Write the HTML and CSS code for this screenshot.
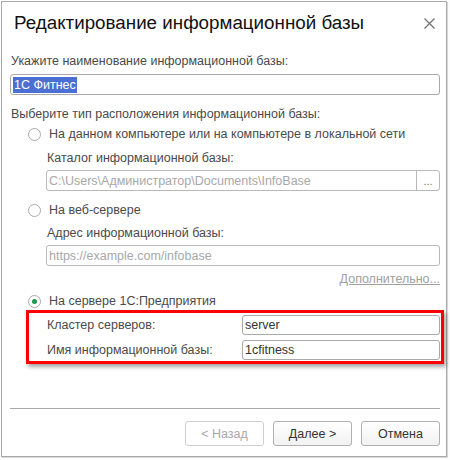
FILE: index.html
```html
<!DOCTYPE html>
<html lang="ru">
<head>
<meta charset="UTF-8">
<title>Редактирование информационной базы</title>
<link rel="stylesheet" href="styles.css">
</head>
<body>

<div class="window">
  <div class="title-bar">
    <h1>Редактирование информационной базы</h1>
    <span class="close">
      <svg width="11" height="11" viewBox="0 0 11 11"><path d="M0.5 0.5 L10.5 10.5 M10.5 0.5 L0.5 10.5" stroke="#6e6e6e" stroke-width="1.2" fill="none"/></svg>
    </span>
  </div>

  <div class="label first">Укажите наименование информационной базы:</div>
  <div class="field"><span class="sel">1С Фитнес</span></div>

  <div class="label gap">Выберите тип расположения информационной базы:</div>

  <div class="radio-row r1"><span class="radio"></span>На данном компьютере или на компьютере в локальной сети</div>
  <div class="sub">
    <div class="label l-cat">Каталог информационной базы:</div>
    <div class="field disabled with-btn">
      <span class="val">C:\Users\Администратор\Documents\InfoBase</span>
      <span class="pick">...</span>
    </div>
  </div>

  <div class="radio-row r2"><span class="radio"></span>На веб-сервере</div>
  <div class="sub">
    <div class="label l-addr">Адрес информационной базы:</div>
    <div class="field disabled"><span class="val">https://example.com/infobase</span></div>
    <div class="more"><a href="#">Дополнительно...</a></div>
  </div>

  <div class="radio-row r3"><span class="radio on"></span>На сервере 1С:Предприятия</div>
  <div class="server-box">
    <div class="row">
      <span class="row-label">Кластер серверов:</span>
      <div class="field small">server</div>
    </div>
    <div class="row">
      <span class="row-label">Имя информационной базы:</span>
      <div class="field small">1cfitness</div>
    </div>
  </div>

  <div class="footer">
    <div class="buttons">
      <button disabled>&lt; Назад</button>
      <button>Далее &gt;</button>
      <button>Отмена</button>
    </div>
  </div>
</div>

</body>
</html>
```

FILE: styles.css
```css
body { margin: 0; background: #fff; font-family: "Liberation Sans", Arial, sans-serif; font-size: 12.5px; color: #4a4a4a; }

.window { margin: 1px; width: 446px; height: 456px; box-sizing: border-box; border: 1px solid #a9a9a9; padding: 0 6px 0 8px; display: flex; flex-direction: column; box-shadow: 1px 1px 1px #d8d8d8; }

.title-bar { display: flex; align-items: center; justify-content: space-between; height: 24px; margin-top: 9px; }
.title-bar h1 { margin: 0 0 0 4px; font-size: 18.8px; font-weight: normal; color: #111; line-height: 24px; }
.close { display: flex; margin-right: 5px; }

.label { line-height: 16px; padding-left: 1px; }
.label.first { margin-top: 18px; }
.label.gap { margin-top: 11px; }
.label.l-cat { margin-top: 8px; }
.label.l-addr { margin-top: 7px; }

.field { height: 21px; box-sizing: border-box; border: 1px solid #a9a9a9; border-radius: 3px; margin-top: 5px; display: flex; align-items: center; padding-left: 2px; color: #333; background: #fff; }
.field .sel { background: #4b6fd3; color: #fff; line-height: 16px; padding: 0 1px; }
.field.disabled { color: #a8a8a8; margin-top: 3px; border-color: #b8b8b8; }
.field .val { flex: 1; }
.field.with-btn { padding-right: 0; }
.pick { width: 22px; height: 100%; border-left: 1px solid #b8b8b8; display: flex; align-items: center; justify-content: center; color: #777; font-size: 11px; }

.sub { padding-left: 36px; }
.sub .field { margin-top: 4px; }

.radio-row { display: flex; align-items: center; line-height: 16px; padding-left: 18px; }
.radio-row.r1 { margin-top: 4px; }
.radio-row.r2 { margin-top: 11px; }
.radio-row.r3 { margin-top: 6px; }
.radio { width: 13px; height: 13px; box-sizing: border-box; border: 1px solid #a9a9a9; border-radius: 50%; margin-right: 8px; display: flex; align-items: center; justify-content: center; background: #fff; }
.radio.on::after { content: ""; width: 5px; height: 5px; border-radius: 50%; background: #1d9a4c; }

.more { text-align: right; margin-top: 5px; line-height: 16px; }
.more a { color: #a0a0a0; text-decoration: underline; }

.server-box { margin: 1px -4px 0 16px; border: 3px solid #ff0000; box-shadow: 2px 3px 4px rgba(0, 0, 0, 0.35); padding: 2px 1px 1px 18px; }
.row { display: flex; align-items: center; justify-content: space-between; }
.row + .row { margin-top: 5px; }
.row-label { line-height: 16px; }
.field.small { width: 198px; height: 20px; margin-top: 0; color: #333; }

.footer { margin-top: auto; border-top: 1px solid #a9a9a9; padding: 12px 0 10px; }
.buttons { display: flex; justify-content: flex-end; gap: 9px; }
.buttons button { width: 79px; height: 25px; font-family: inherit; font-size: 12.5px; color: #333; background: linear-gradient(#ffffff, #f2f2f2); border: 1px solid #b0b0b0; border-radius: 3px; padding: 0; }
.buttons button:disabled { color: #a8a8a8; border-color: #cfcfcf; background: #fff; }
```
